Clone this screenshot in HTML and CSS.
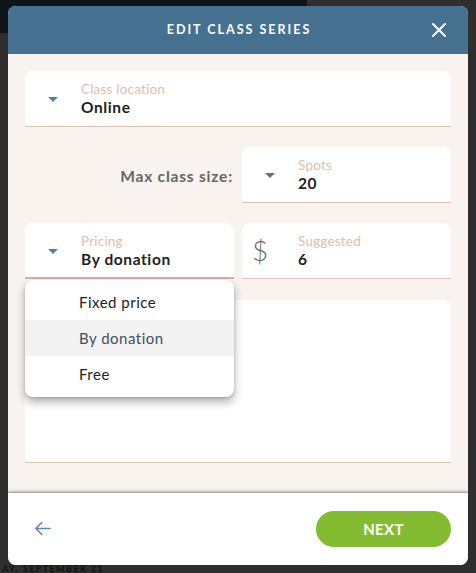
FILE: index.html
```html
<!DOCTYPE html>
<html>
<head>
<meta charset="utf-8">
<link rel="stylesheet" href="styles.css">
</head>
<body>
<div class="modal">
  <header class="modal-header">
    <span></span>
    <h1 class="title">EDIT CLASS SERIES</h1>
    <button class="close" aria-label="Close">
      <svg width="14" height="14" viewBox="0 0 14 14"><path d="M1 1 L13 13 M13 1 L1 13" stroke="#fff" stroke-width="2" stroke-linecap="square" fill="none"/></svg>
    </button>
  </header>
  <main class="modal-body">
    <div class="field">
      <div class="lead"><span class="caret blue"></span></div>
      <div class="content">
        <div class="label">Class location</div>
        <div class="value">Online</div>
      </div>
    </div>
    <div class="row">
      <div class="side-label">Max class size:</div>
      <div class="field">
        <div class="lead"><span class="caret gray"></span></div>
        <div class="content">
          <div class="label">Spots</div>
          <div class="value">20</div>
        </div>
      </div>
    </div>
    <div class="row">
      <div class="field-wrap">
        <div class="field active">
          <div class="lead"><span class="caret blue"></span></div>
          <div class="content">
            <div class="label">Pricing</div>
            <div class="value">By donation</div>
          </div>
        </div>
        <ul class="menu">
          <li class="item">Fixed price</li>
          <li class="item selected">By donation</li>
          <li class="item">Free</li>
        </ul>
      </div>
      <div class="field">
        <div class="lead dollar">$</div>
        <div class="content">
          <div class="label">Suggested</div>
          <div class="value">6</div>
        </div>
      </div>
    </div>
    <div class="textarea"></div>
  </main>
  <footer class="modal-footer">
    <button class="back" aria-label="Back">
      <svg width="17" height="15" viewBox="0 0 17 15"><path d="M16 7.5 H1.8 M7.8 1.5 L1.8 7.5 L7.8 13.5" stroke="#5b89b1" stroke-width="1.6" fill="none" stroke-linecap="round" stroke-linejoin="round"/></svg>
    </button>
    <button class="next">NEXT</button>
  </footer>
</div>
<div class="page-behind">AY, SEPTEMBER 21</div>
</body>
</html>
```
FILE: styles.css
```css
* { box-sizing: border-box; }
html, body { margin: 0; padding: 0; }
body {
  width: 476px;
  height: 573px;
  overflow: hidden;
  font-family: Lato, "Open Sans", "DejaVu Sans", sans-serif;
  background:
    linear-gradient(#0f1419, #0f1419) no-repeat 0 0 / 307px 33px,
    #2e2e2e;
}
.modal {
  margin: 6px 8px 0;
  width: 460px;
  height: 559px;
  border-radius: 8px;
  overflow: hidden;
  display: flex;
  flex-direction: column;
  background: #fff;
}
.modal-header {
  height: 48px;
  flex: none;
  background: #46708f;
  display: grid;
  grid-template-columns: 1fr auto 1fr;
  align-items: center;
  padding-right: 22px;
  padding-left: 22px;
}
.title {
  margin: 0;
  color: #fff;
  font-size: 12.5px;
  font-weight: 700;
  letter-spacing: 2px;
  line-height: 1;
  padding-left: 2px;
}
.close {
  justify-self: end;
  background: none;
  border: 0;
  padding: 0;
  width: 14px;
  height: 14px;
  display: block;
}
.close svg { display: block; }
.modal-body {
  flex: 1;
  background: #f9f3f0;
  padding: 17px 17px 0;
  display: flex;
  flex-direction: column;
  gap: 20px;
}
.field {
  height: 56px;
  background: #fff;
  border-radius: 8px 8px 0 0;
  border-bottom: 1px solid #e2c0b3;
  display: flex;
}
.field.active { border-bottom: 2px solid #d6b1a3; }
.lead {
  width: 56px;
  flex: none;
  display: flex;
  align-items: center;
  justify-content: center;
}
.caret {
  width: 0;
  height: 0;
  border-left: 5px solid transparent;
  border-right: 5px solid transparent;
  border-top: 5px solid #4a7fa7;
  margin-top: 2px;
}
.caret.gray { border-top-color: #6e6e6e; }
.dollar {
  justify-content: flex-start;
  padding-left: 10px;
  font-size: 28px;
  font-weight: 300;
  color: #666;
  padding-bottom: 2px;
}
.content {
  padding-top: 10px;
  min-width: 0;
}
.label {
  font-size: 13.5px;
  line-height: 17px;
  color: #e3bcac;
  font-weight: 400;
  letter-spacing: 0.2px;
}
.value {
  font-size: 15.5px;
  line-height: 19px;
  font-weight: 700;
  color: #222;
  letter-spacing: 0.6px;
}
.row {
  display: grid;
  grid-template-columns: 1fr 1fr;
  gap: 8px;
}
.side-label {
  display: flex;
  align-items: center;
  justify-content: flex-end;
  padding-right: 1px;
  padding-top: 1px;
  font-size: 15.5px;
  font-weight: 700;
  color: #666;
  letter-spacing: 0.8px;
}
.field-wrap { position: relative; }
.menu {
  position: absolute;
  left: 0;
  right: 0;
  top: 57px;
  margin: 0;
  padding: 4px 0 5px;
  list-style: none;
  background: #fff;
  border-radius: 8px;
  box-shadow: 0 5px 10px rgba(0, 0, 0, 0.32), 0 1px 3px rgba(0, 0, 0, 0.12);
  z-index: 2;
}
.item {
  height: 36px;
  display: flex;
  align-items: center;
  padding-left: 54px;
  font-size: 15px;
  color: #222;
  letter-spacing: 0.5px;
}
.item.selected {
  background: #f3f3f3;
  color: #3f4f63;
}
.textarea {
  height: 163px;
  background: #fff;
  border-radius: 8px 8px 0 0;
  border-bottom: 1px solid #e2c0b3;
  margin-top: 1px;
}
.modal-footer {
  height: 72px;
  flex: none;
  background: #fff;
  position: relative;
  box-shadow: 0 -1px 2px rgba(0, 0, 0, 0.35), 0 -2px 4px rgba(0, 0, 0, 0.12);
  display: flex;
  align-items: center;
  justify-content: space-between;
  padding: 0 17px 1px 26px;
}
.back {
  background: none;
  border: 0;
  padding: 0;
  width: 17px;
  height: 15px;
}
.back svg { display: block; }
.next {
  width: 135px;
  height: 36px;
  border: 0;
  border-radius: 18px;
  background: #84bc31;
  color: #fff;
  font-family: Lato, "Open Sans", sans-serif;
  font-size: 15px;
  font-weight: 700;
  letter-spacing: 0.3px;
  padding: 0;
}
.page-behind {
  padding-left: 2px;
  font-size: 9px;
  font-weight: 900;
  letter-spacing: 1.4px;
  line-height: 8px;
  color: #141414;
}
```
